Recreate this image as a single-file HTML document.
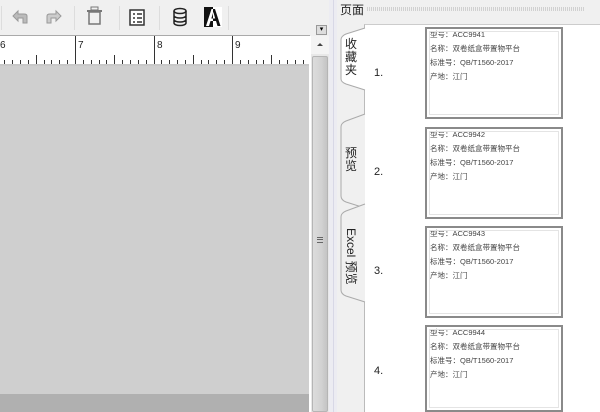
<!DOCTYPE html><html><head><meta charset="utf-8"><style>
*{margin:0;padding:0;box-sizing:border-box}
html,body{width:600px;height:412px;overflow:hidden}
body{background:#f0f0f0;font-family:"Liberation Sans","Noto Sans CJK SC",sans-serif;position:relative}
.a{position:absolute}
.card{position:absolute;left:425px;width:138px;height:92px;border:2px solid #8a8a8a;background:#fff}
.card .in{position:absolute;left:2px;top:2px;right:2px;bottom:2px;border:1px solid #e4e4e4}
.card p{font-size:7.5px;color:#444;line-height:17px;padding-left:3px;margin-top:-3px;white-space:nowrap}
.num{position:absolute;left:374px;font-size:11px;color:#222}
.sep{position:absolute;top:6px;width:1px;height:24px;background:#ddd}
</style></head><body>
<div class="a" style="left:0;top:0;width:330px;height:36px;background:#f0f0f0"></div>
<div class="sep" style="left:1px"></div>
<div class="sep" style="left:74px"></div>
<div class="sep" style="left:119px"></div>
<div class="sep" style="left:159px"></div>
<div class="sep" style="left:228px"></div>
<svg class="a" style="left:0;top:0" width="330" height="36">
<path d="M27 16 Q27 14 24 14 L18 14 L18 11 L13 16 L18 21 L18 18 L23 18 L23 23 L27 23 Z" fill="#bbb" stroke="#999"/>
<path d="M47 16 Q47 14 50 14 L56 14 L56 11 L61 16 L56 21 L56 18 L51 18 L51 23 L47 23 Z" fill="#ccc" stroke="#999"/>
<rect x="89" y="12" width="11" height="12" fill="none" stroke="#777" stroke-width="1.5"/>
<rect x="87" y="10" width="15" height="2" fill="#777"/><rect x="91" y="7" width="7" height="3" fill="none" stroke="#777"/>
<rect x="130" y="10" width="14" height="15" fill="#fff" stroke="#333" stroke-width="1.5"/>
<path d="M133 14h2M137 14h5M133 18h2M137 18h5M133 22h2M137 22h5" stroke="#333" stroke-width="1.5"/>
<ellipse cx="180" cy="11" rx="6" ry="2.5" fill="none" stroke="#222" stroke-width="1.5"/>
<path d="M174 11v12M186 11v12M174 15.5a6 2.5 0 0 0 12 0M174 19.5a6 2.5 0 0 0 12 0M174 23a6 2.5 0 0 0 12 0" fill="none" stroke="#222" stroke-width="1.5"/>
<rect x="204" y="7" width="18" height="20" fill="#fff"/><rect x="204" y="7" width="9" height="20" fill="#111"/>
<path d="M206 26 L211.5 9 L215 9 L220.5 26 L217.5 26 L216 21 L210.5 21 L209 26 Z M211.3 18.5 L215.2 18.5 L213.3 12 Z" fill="#fff" fill-rule="evenodd"/>
<path d="M213 9 L215 9 L220.5 26 L217.5 26 L216 21 L213 21 L213 18.5 L215.2 18.5 L213.3 12 L213 13 Z" fill="#111"/>
</svg>
<div class="a" style="left:0;top:35px;width:310px;height:1px;background:#aaa"></div>
<div class="a" style="left:0;top:36px;width:310px;height:30px;background:#fff"></div>
<svg class="a" style="left:0;top:36px" width="310" height="30">
<g stroke="#333" stroke-width="1" id="ticks"></g>
<text x="0" y="12" font-size="10" fill="#222" font-family="Liberation Sans">6</text>
<text x="78" y="12" font-size="10" fill="#222" font-family="Liberation Sans">7</text>
<text x="157" y="12" font-size="10" fill="#222" font-family="Liberation Sans">8</text>
<text x="235" y="12" font-size="10" fill="#222" font-family="Liberation Sans">9</text>
</svg>
<script>
var g=document.getElementById('ticks'),s='';
for(var i=-10;i<40;i++){var x=Math.round(75+i*7.85)+0.5;if(x<0||x>308)continue;var h=(i%10==0)?28:(i%5==0)?9:4;s+='<line x1="'+x+'" y1="'+(28-h)+'" x2="'+x+'" y2="28"/>';}
g.innerHTML=s;
</script>
<div class="a" style="left:0;top:64px;width:310px;height:2px;background:#c8c8c8"></div>
<div class="a" style="left:0;top:66px;width:309px;height:328px;background:#cfcfcf"></div>
<div class="a" style="left:0;top:394px;width:309px;height:18px;background:#b0b0b0"></div>
<div class="a" style="left:309px;top:36px;width:2px;height:376px;background:#fff"></div>
<div class="a" style="left:311px;top:36px;width:18px;height:376px;background:#e8e8e8"></div>
<div class="a" style="left:311px;top:36px;width:18px;height:18px;background:#f4f4f4"></div>
<div class="a" style="left:317px;top:43px;width:0;height:0;border-left:3px solid transparent;border-right:3px solid transparent;border-bottom:3px solid #444"></div>
<div class="a" style="left:312px;top:56px;width:16px;height:356px;background:linear-gradient(90deg,#dcdcdc,#d2d2d2 60%,#c4c4c4);border:1px solid #b5b5b5;border-radius:2px"></div>
<div class="a" style="left:317px;top:237px;width:6px;height:6px;border-top:1px solid #666;border-bottom:1px solid #666"></div><div class="a" style="left:317px;top:239px;width:6px;height:1px;background:#666"></div>
<div class="a" style="left:316px;top:25px;width:11px;height:10px;background:#ddd;border:1px solid #999;font-size:7px;line-height:8px;text-align:center">▾</div>
<div class="a" style="left:329px;top:0;width:8px;height:412px;background:#ececf2"></div>
<div class="a" style="left:333px;top:0;width:1px;height:412px;background:#d8d8e6"></div>
<div class="a" style="left:340px;top:1px;font-size:12px;color:#222">页面</div>
<div class="a" style="left:367px;top:7px;width:218px;height:4px;background:repeating-linear-gradient(90deg,#c8c8c8 0 1px,transparent 1px 2px);opacity:.8"></div>
<div class="a" style="left:364px;top:24px;width:236px;height:388px;background:#fff;border-left:1px solid #bbb;border-top:1px solid #ccc"></div>
<svg class="a" style="left:338px;top:24px" width="28" height="388">
<path d="M27 4 L8 10 Q3 12 3 16 L3 55 Q3 58 8 60 L27 66" fill="#fff" stroke="#aaa"/>
<path d="M27 90 L8 97 Q3 99 3 103 L3 172 Q3 176 8 178 L27 184" fill="#f0f0f0" stroke="#aaa"/>
<path d="M27 180 L8 187 Q3 189 3 193 L3 266 Q3 270 8 272 L27 278" fill="#f0f0f0" stroke="#aaa"/>
</svg>
<div class="a" style="left:345px;top:38px;font-size:12px;line-height:13px;width:13px;color:#222">收藏夹</div>
<div class="a" style="left:345px;top:147px;font-size:12px;line-height:13px;width:13px;color:#222">预览</div>
<div class="a" style="left:343px;top:228px;font-size:12px;color:#222;writing-mode:vertical-rl;text-orientation:sideways;white-space:nowrap;line-height:16px">Excel 预览</div>
<div class="num" style="top:67px">1.</div>
<div class="num" style="top:166px">2.</div>
<div class="num" style="top:265px">3.</div>
<div class="num" style="top:365px">4.</div>
<div class="card" style="top:27px"><div class="in"></div><p>型号：ACC9941</p><p>名称：双卷纸盒带置物平台</p><p>标准号：QB/T1560-2017</p><p>产地：江门</p></div>
<div class="card" style="top:127px"><div class="in"></div><p>型号：ACC9942</p><p>名称：双卷纸盒带置物平台</p><p>标准号：QB/T1560-2017</p><p>产地：江门</p></div>
<div class="card" style="top:226px"><div class="in"></div><p>型号：ACC9943</p><p>名称：双卷纸盒带置物平台</p><p>标准号：QB/T1560-2017</p><p>产地：江门</p></div>
<div class="card" style="top:325px;height:87px"><div class="in"></div><p>型号：ACC9944</p><p>名称：双卷纸盒带置物平台</p><p>标准号：QB/T1560-2017</p><p>产地：江门</p></div>
</body></html>
